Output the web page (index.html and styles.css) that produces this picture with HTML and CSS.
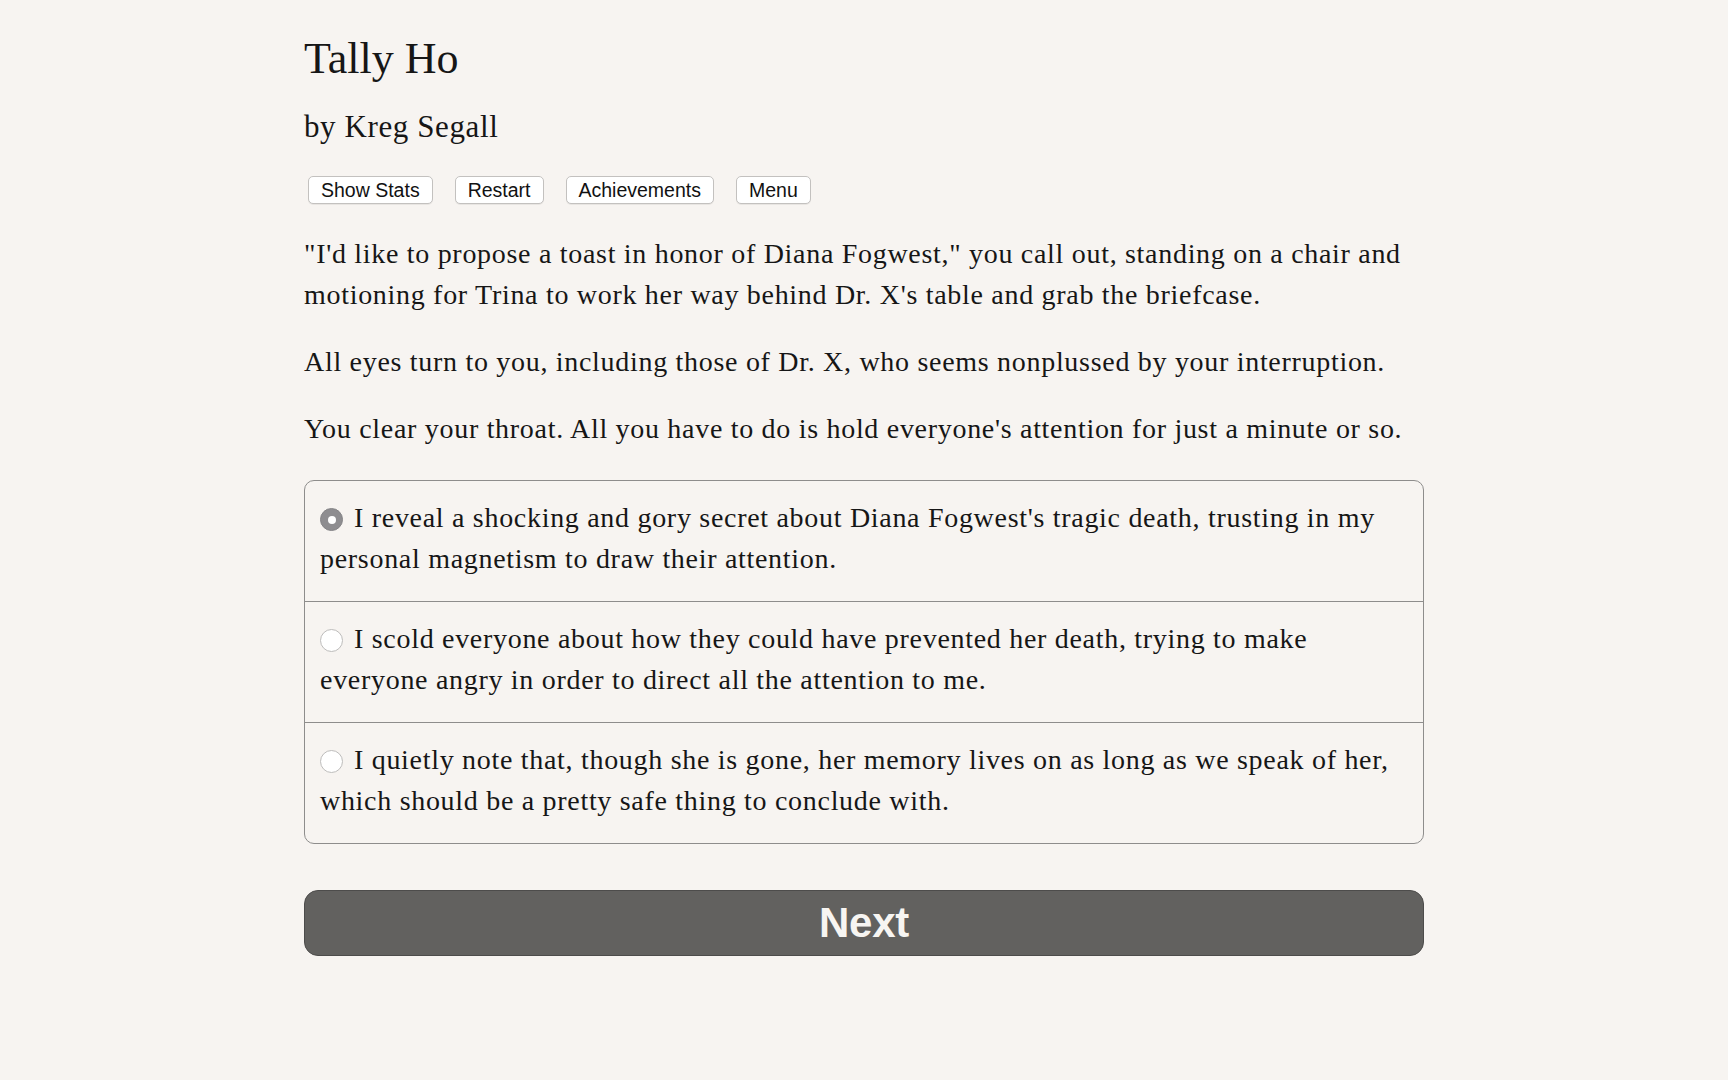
FILE: index.html
```html
<!DOCTYPE html>
<html lang="en">
<head>
<meta charset="utf-8">
<title>Tally Ho</title>
<link rel="stylesheet" href="styles.css">
</head>
<body>
<main class="page">
  <h1 class="title">Tally Ho</h1>
  <h2 class="author">by Kreg Segall</h2>
  <nav class="toolbar">
    <button class="tool-btn">Show Stats</button>
    <button class="tool-btn">Restart</button>
    <button class="tool-btn">Achievements</button>
    <button class="tool-btn">Menu</button>
  </nav>
  <div class="story">
    <p>"I'd like to propose a toast in honor of Diana Fogwest," you call out, standing on a chair and motioning for Trina to work her way behind Dr. X's table and grab the briefcase.</p>
    <p>All eyes turn to you, including those of Dr. X, who seems nonplussed by your interruption.</p>
    <p>You clear your throat. All you have to do is hold everyone's attention for just a minute or so.</p>
  </div>
  <div class="choices">
    <label class="choice"><span class="radio checked"></span>I reveal a shocking and gory secret about Diana Fogwest's tragic death, trusting in my personal magnetism to draw their attention.</label>
    <label class="choice"><span class="radio"></span>I scold everyone about how they could have prevented her death, trying to make everyone angry in order to direct all the attention to me.</label>
    <label class="choice"><span class="radio"></span>I quietly note that, though she is gone, her memory lives on as long as we speak of her, which should be a pretty safe thing to conclude with.</label>
  </div>
  <button class="next-btn">Next</button>
</main>
</body>
</html>
```

FILE: styles.css
```css
html, body {
  margin: 0;
  padding: 0;
  background: #f7f4f1;
}

body {
  font-family: "Liberation Serif", "Times New Roman", serif;
  color: #161616;
}

.page {
  width: 1120px;
  margin: 0 auto;
  padding-top: 32px;
}

.title {
  margin: 0;
  font-size: 44px;
  font-weight: normal;
  line-height: 54px;
}

.author {
  margin: 21px 0 0;
  font-size: 31px;
  font-weight: normal;
  line-height: 40px;
  letter-spacing: 0.6px;
}

.toolbar {
  display: flex;
  gap: 22px;
  margin-top: 29px;
  padding-left: 4px;
}

.tool-btn {
  height: 28px;
  padding: 0 12px;
  font-family: "Liberation Sans", Arial, sans-serif;
  font-size: 19.5px;
  color: #111;
  background: #fff;
  border: 1px solid #c3c1bf;
  border-radius: 5px;
  box-shadow: 0 1px 0 rgba(0,0,0,0.06);
  line-height: 26px;
}

.story {
  margin-top: 30px;
}

.story p {
  margin: 0 0 26.5px;
  font-size: 28px;
  line-height: 40.5px;
  letter-spacing: 0.7px;
}

.choices {
  margin-top: 31px;
  border: 1px solid #8e8d8c;
  border-radius: 10px;
  overflow: hidden;
}

.choice {
  display: block;
  padding: 17px 15px 22px;
  font-size: 28px;
  line-height: 40.5px;
  letter-spacing: 0.7px;
}

.choice + .choice {
  border-top: 1px solid #8e8d8c;
}

.radio {
  display: inline-block;
  box-sizing: border-box;
  width: 23px;
  height: 23px;
  margin-right: 11px;
  vertical-align: -4px;
  border-radius: 50%;
  background: #fff;
  border: 1px solid #bdbcbb;
  position: relative;
}

.radio.checked {
  background: #8e8d90;
  border-color: #858487;
}

.radio.checked::after {
  content: "";
  position: absolute;
  left: 50%;
  top: 50%;
  width: 8px;
  height: 8px;
  margin: -4px 0 0 -4px;
  border-radius: 50%;
  background: #fff;
}

.next-btn {
  display: block;
  width: 100%;
  height: 66px;
  margin-top: 46px;
  background: #62615f;
  border: 1px solid #4d4c4b;
  border-radius: 14px;
  color: #f7f5f2;
  font-family: "Liberation Sans", Arial, sans-serif;
  font-weight: bold;
  font-size: 42px;
  letter-spacing: -0.3px;
}
```
